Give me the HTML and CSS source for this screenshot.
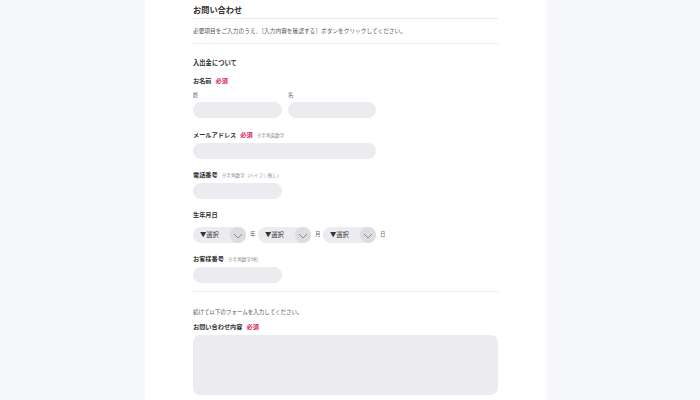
FILE: index.html
```html
<!DOCTYPE html>
<html lang="ja">
<head>
<meta charset="utf-8">
<link rel="stylesheet" href="styles.css">
</head>
<body>
<div class="page">
  <h1 class="title">お問い合わせ</h1>
  <p class="desc">必要項目をご入力のうえ、［入力内容を確認する］ボタンをクリックしてください。</p>

  <h2 class="section">入出金について</h2>

  <div class="label l-name">お名前<span class="req">必須</span></div>
  <div class="name-row">
    <div class="name-col"><div class="sub">姓</div><div class="input w89"></div></div>
    <div class="name-col"><div class="sub">名</div><div class="input w88"></div></div>
  </div>

  <div class="label l-mail">メールアドレス<span class="req">必須</span><span class="note">※半角英数字</span></div>
  <div class="input w183 i-mail"></div>

  <div class="label l-tel">電話番号<span class="note">※半角数字（ハイフン無し）</span></div>
  <div class="input w89 i-tel"></div>

  <div class="label l-birth">生年月日</div>
  <div class="date-row">
    <div class="date-group"><div class="select"><span class="sel-text">▼選択</span><span class="arrow"><svg width="10" height="6" viewBox="0 0 10 6"><path d="M1 1 L5 5 L9 1" fill="none" stroke="#8e8e95" stroke-width="1"/></svg></span></div><span class="unit">年</span></div>
    <div class="date-group"><div class="select"><span class="sel-text">▼選択</span><span class="arrow"><svg width="10" height="6" viewBox="0 0 10 6"><path d="M1 1 L5 5 L9 1" fill="none" stroke="#8e8e95" stroke-width="1"/></svg></span></div><span class="unit">月</span></div>
    <div class="date-group"><div class="select"><span class="sel-text">▼選択</span><span class="arrow"><svg width="10" height="6" viewBox="0 0 10 6"><path d="M1 1 L5 5 L9 1" fill="none" stroke="#8e8e95" stroke-width="1"/></svg></span></div><span class="unit">日</span></div>
  </div>

  <div class="label l-cust">お客様番号<span class="note">※半角数字8桁</span></div>
  <div class="input w89 i-cust"></div>

  <p class="desc2">続けて以下のフォームを入力してください。</p>
  <div class="label l-inq">お問い合わせ内容<span class="req">必須</span></div>
  <div class="textarea"></div>
</div>
</body>
</html>
```

FILE: styles.css
```css
html, body {
  margin: 0;
  padding: 0;
}
body {
  background: #f6f7f9;
  font-family: "Noto Sans CJK JP", "Noto Sans", sans-serif;
  color: #333;
  height: 400px;
  overflow: hidden;
}
.page {
  width: 305px;
  margin-left: 145px;
  padding: 0 49px 0 48px;
  background: #fff;
  min-height: 400px;
}
.title {
  margin: 0;
  padding: 2px 0 2px;
  font-size: 8.2px;
  line-height: 14px;
  font-weight: 700;
  color: #333;
  border-bottom: 1px solid #e9e9ed;
}
.desc {
  margin: 7px 0 0;
  padding-bottom: 7px;
  font-size: 5.7px;
  line-height: 10px;
  color: #555;
  border-bottom: 1px solid #eeeef1;
}
.section {
  margin: 14px 0 0;
  font-size: 6.3px;
  line-height: 10px;
  font-weight: 700;
}
.label {
  font-size: 6.2px;
  line-height: 10px;
  font-weight: 700;
  color: #333;
  display: flex;
  align-items: baseline;
}
.req {
  color: #e02462;
  margin-left: 4px;
}
.note {
  font-size: 4.6px;
  font-weight: 400;
  color: #888;
  margin-left: 4px;
}
.l-name { margin-top: 8px; }
.name-row {
  display: flex;
  gap: 6px;
}
.sub {
  margin-top: 4px;
  font-size: 5.5px;
  line-height: 10px;
  color: #666;
}
.input {
  height: 16px;
  border-radius: 8px;
  background: #ececf0;
}
.name-col .input { margin-top: 2px; }
.w89 { width: 89px; }
.w88 { width: 88px; }
.w183 { width: 183px; }
.l-mail { margin-top: 12px; }
.i-mail { margin-top: 3px; }
.l-tel { margin-top: 11px; }
.i-tel { margin-top: 3px; }
.l-birth { margin-top: 11px; }
.date-row {
  display: flex;
  margin-top: 7px;
}
.date-group {
  width: 65px;
  display: flex;
  align-items: center;
}
.select {
  width: 53px;
  height: 16px;
  border-radius: 8px;
  background: #ececf0;
  display: flex;
  align-items: center;
  justify-content: space-between;
}
.sel-text {
  font-size: 6.3px;
  color: #333;
  padding-left: 7px;
  line-height: 16px;
}
.arrow {
  width: 16px;
  height: 16px;
  border-radius: 50%;
  background: #dcdce1;
  display: flex;
  align-items: center;
  justify-content: center;
}
.arrow svg { display: block; margin-top: 1px; }
.unit {
  font-size: 5.5px;
  color: #666;
  margin-left: 4px;
  margin-top: -2px;
}
.l-cust { margin-top: 11px; }
.i-cust { margin-top: 3px; }
.desc2 {
  margin: 8px 0 0;
  padding-top: 15px;
  border-top: 1px solid #eeeef1;
  font-size: 5.5px;
  line-height: 10px;
  color: #555;
}
.l-inq { margin-top: 5px; }
.textarea {
  margin-top: 3px;
  height: 60px;
  border-radius: 7px;
  background: #ececf0;
}
```
